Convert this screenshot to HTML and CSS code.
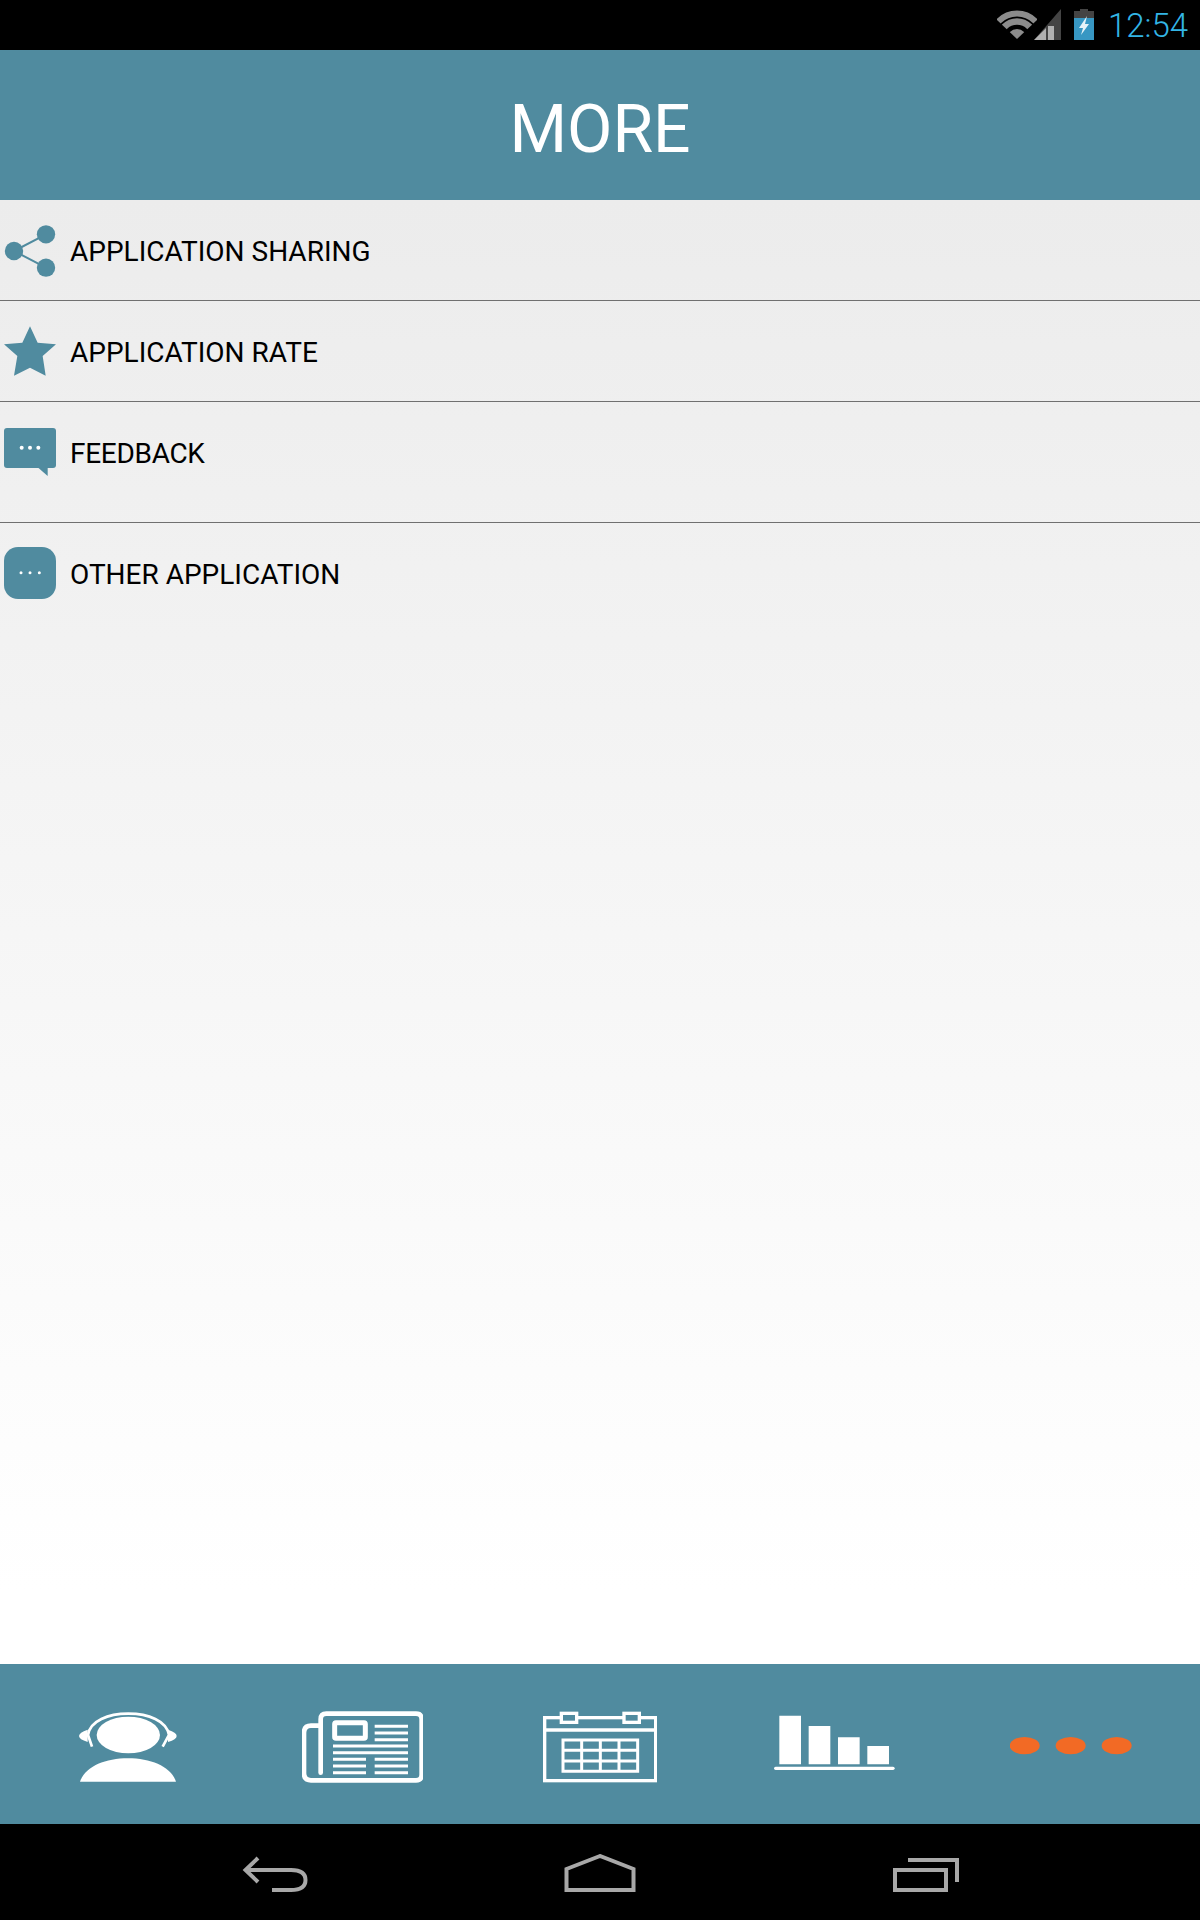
FILE: index.html
```html
<!DOCTYPE html>
<html lang="en">
<head>
<meta charset="utf-8">
<title>More</title>
<link rel="stylesheet" href="styles.css">
</head>
<body>
<div class="app">
  <div class="status">
    <svg class="st-wifi" viewBox="0 0 40 32">
      <defs><clipPath id="fan"><path d="M20 30 L-2 9 Q20 -8 42 9 Z"/></clipPath></defs>
      <g clip-path="url(#fan)" fill="none" stroke="#8c8c8c">
        <circle cx="20" cy="30" r="25.500" stroke-width="6"/>
        <circle cx="20" cy="30" r="17.500" stroke-width="6.500"/>
        <circle cx="20" cy="30" r="5" stroke-width="10"/>
      </g>
    </svg>
    <svg class="st-signal" viewBox="0 0 28 32">
      <path d="M27 1V32H0Z" fill="#444"/>
      <path d="M12 20V32H0ZM14 18H20V32H14Z" fill="#b0b0b0"/>
    </svg>
    <svg class="st-battery" viewBox="0 0 20 32">
      <path d="M6 1H14V3H20V32H0V3H6Z" fill="#444"/>
      <rect x="0" y="10" width="20" height="22" fill="#3797c3"/>
      <path d="M13 8L5 20H9L7 27L15 16H11Z" fill="#e6f3f8"/>
    </svg>
    <span class="time">12:54</span>
  </div>

  <header class="head">MORE</header>

  <main class="list">
    <div class="row">
      <svg class="row-icon" viewBox="12 102 156 156">
        <path d="M42 180L138 130M42 180L138 230" stroke="#508b9f" stroke-width="6" fill="none"/>
        <circle cx="42" cy="180" r="27.500" fill="#508b9f"/>
        <circle cx="138" cy="130" r="27.500" fill="#508b9f"/>
        <circle cx="138" cy="230" r="27.500" fill="#508b9f"/>
      </svg>
      <span class="label">APPLICATION SHARING</span>
    </div>
    <div class="row">
      <svg class="row-icon" viewBox="12 408 156 156">
        <polygon points="90,409 113,458 168,463 128,498 137,557 90,533 42,557 52,498 12,463 67,458" fill="#508b9f"/>
      </svg>
      <span class="label">APPLICATION RATE</span>
    </div>
    <div class="row row-tall">
      <svg class="row-icon" viewBox="12 81 156 156">
        <rect x="12" y="84" width="156" height="120" rx="9" fill="#508b9f"/>
        <path d="M113 202L143 228V202Z" fill="#508b9f"/>
        <circle cx="65" cy="143" r="6" fill="#fff"/>
        <circle cx="90" cy="143" r="6" fill="#fff"/>
        <circle cx="115" cy="143" r="6" fill="#fff"/>
      </svg>
      <span class="label label-tight">FEEDBACK</span>
    </div>
    <div class="row row-last">
      <svg class="row-icon" viewBox="12 441 156 156">
        <rect x="12" y="441" width="156" height="156" rx="42" fill="#508b9f"/>
        <circle cx="63" cy="518" r="4.500" fill="#fff"/>
        <circle cx="90" cy="518" r="4.500" fill="#fff"/>
        <circle cx="118" cy="518" r="4.500" fill="#fff"/>
      </svg>
      <span class="label label-low">OTHER APPLICATION</span>
    </div>
  </main>

  <nav class="tabs">
    <svg class="tab tab-person" viewBox="87 90 295 220">
      <ellipse cx="235" cy="165" rx="95" ry="55" fill="#fff"/>
      <path d="M126 200L114 165C120 122 175 101 235 101C295 101 350 122 357 165L338 200" fill="none" stroke="#fff" stroke-width="8"/>
      <path d="M113 149Q87 158 87 168Q87 178 113 186Z M354 149Q380 157 380 168Q380 179 354 186Z" fill="#fff"/>
      <path d="M90 305C105 260 165 235 234 235C303 235 363 260 378 305Z" fill="#fff"/>
    </svg>
    <svg class="tab tab-news" viewBox="755 90 365 220">
      <path d="M811 278V118Q811 101 828 101H1097Q1114 101 1114 118V284Q1114 301 1097 301H782Q761 301 761 280V158Q761 137 782 137H811" fill="none" stroke="#fff" stroke-width="14" stroke-linecap="round"/>
      <rect x="853" y="128" width="92" height="47" rx="4" fill="none" stroke="#fff" stroke-width="15"/>
      <path d="M973 139H1073M973 159H1073M973 179H1073M848 198H1073M848 218H1073M848 238H947M973 238H1073M848 258H947M973 258H1073M848 278H947M973 278H1073" stroke="#fff" stroke-width="9" fill="none"/>
    </svg>
    <svg class="tab tab-cal" viewBox="70 90 342 220">
      <rect x="75" y="113" width="333" height="189" fill="none" stroke="#fff" stroke-width="10"/>
      <path d="M75 150H408" stroke="#fff" stroke-width="10"/>
      <rect x="125" y="100" width="46" height="27" fill="#508b9f" stroke="#fff" stroke-width="10"/>
      <rect x="313" y="100" width="46" height="27" fill="#508b9f" stroke="#fff" stroke-width="10"/>
      <path d="M130 180H354V274H130ZM130 211H354M130 243H354M186 180V274M242 180V274M298 180V274" fill="none" stroke="#fff" stroke-width="9"/>
    </svg>
    <svg class="tab tab-chart" viewBox="763 90 362 220">
      <path d="M779 107H844V253H779ZM867 138H932V253H867ZM955 172H1020V253H955ZM1043 198H1108V253H1043Z" fill="#fff"/>
      <rect x="763" y="260" width="362" height="10" rx="5" fill="#fff"/>
    </svg>
    <svg class="tab tab-dots" viewBox="90 90 365 220">
      <ellipse cx="134" cy="197" rx="45" ry="26" fill="#f26a25"/>
      <ellipse cx="272" cy="197" rx="45" ry="26" fill="#f26a25"/>
      <ellipse cx="410" cy="197" rx="45" ry="26" fill="#f26a25"/>
    </svg>
  </nav>

  <div class="sysbar">
    <svg class="sys sys-back" viewBox="242 1854 68 40">
      <path d="M258 1858L245.500 1870L258 1882M246 1870H291Q305.500 1870 305.500 1880Q305.500 1890 291 1890H272" fill="none" stroke="#a8a8a8" stroke-width="4"/>
    </svg>
    <svg class="sys sys-home" viewBox="563 1854 74 40">
      <path d="M600 1856L566.500 1869V1890H633.500V1869Z" fill="none" stroke="#a8a8a8" stroke-width="4"/>
    </svg>
    <svg class="sys sys-recent" viewBox="892 1854 69 40">
      <rect x="895" y="1870" width="51" height="20" fill="none" stroke="#a8a8a8" stroke-width="4"/>
      <path d="M908 1860H957V1882" fill="none" stroke="#a8a8a8" stroke-width="4"/>
    </svg>
  </div>
</div>
</body>
</html>
```

FILE: styles.css
```css
* { box-sizing: border-box; }
html, body { margin: 0; padding: 0; }
body { font-family: Roboto, "Liberation Sans", sans-serif; background: #000; }

.app {
  display: flex;
  flex-direction: column;
  width: 1200px;
  height: 1920px;
  overflow: hidden;
}

.status {
  display: flex;
  align-items: flex-start;
  height: 50px;
  flex: none;
  background: #000;
  padding-left: 997px;
}
.st-wifi { width: 40px; height: 32px; margin-top: 9px; }
.st-signal { width: 28px; height: 32px; margin-top: 8px; margin-left: -3px; }
.st-battery { width: 20px; height: 32px; margin-top: 8px; margin-left: 12px; }
.time {
  margin-left: 14px;
  color: #33b5e5;
  font-size: 33px;
  line-height: 52px;
  font-weight: 300;
  white-space: nowrap;
}

.head {
  flex: none;
  height: 150px;
  background: #508b9f;
  color: #fff;
  font-size: 66px;
  line-height: 160px;
  text-align: center;
}

.list {
  flex: 1;
  background: linear-gradient(#ececec 0%, #ffffff 95%);
}
.row {
  display: flex;
  align-items: flex-start;
  height: 101px;
  padding: 25px 0 0 4px;
  border-bottom: 1px solid #707070;
}
.row-tall { height: 121px; }
.row-last { border-bottom: 0; padding-top: 24px; height: auto; }
.row-icon { width: 52px; height: 52px; flex: none; }
.label {
  margin-left: 14px;
  color: #000;
  font-size: 28px;
  line-height: 54px;
}
.label-tight { letter-spacing: -0.3px; }
.label-low { margin-top: 1px; }

.tabs {
  flex: none;
  display: flex;
  align-items: flex-start;
  height: 160px;
  background: #508b9f;
  padding: 46px 0 0 79px;
}
.tab { height: 73.33px; flex: none; }
.tab-person { width: 98.33px; }
.tab-news { width: 121.67px; margin-left: 124.4px; }
.tab-cal { width: 114px; margin-left: 120px; }
.tab-chart { width: 120.67px; margin-left: 117px; }
.tab-dots { width: 121.67px; margin-left: 115px; }

.sysbar {
  flex: none;
  display: flex;
  align-items: flex-start;
  height: 96px;
  background: #000;
  padding: 30px 0 0 242px;
}
.sys { height: 40px; flex: none; }
.sys-back { width: 68px; }
.sys-home { width: 74px; margin-left: 253px; }
.sys-recent { width: 69px; margin-left: 255px; }
```
